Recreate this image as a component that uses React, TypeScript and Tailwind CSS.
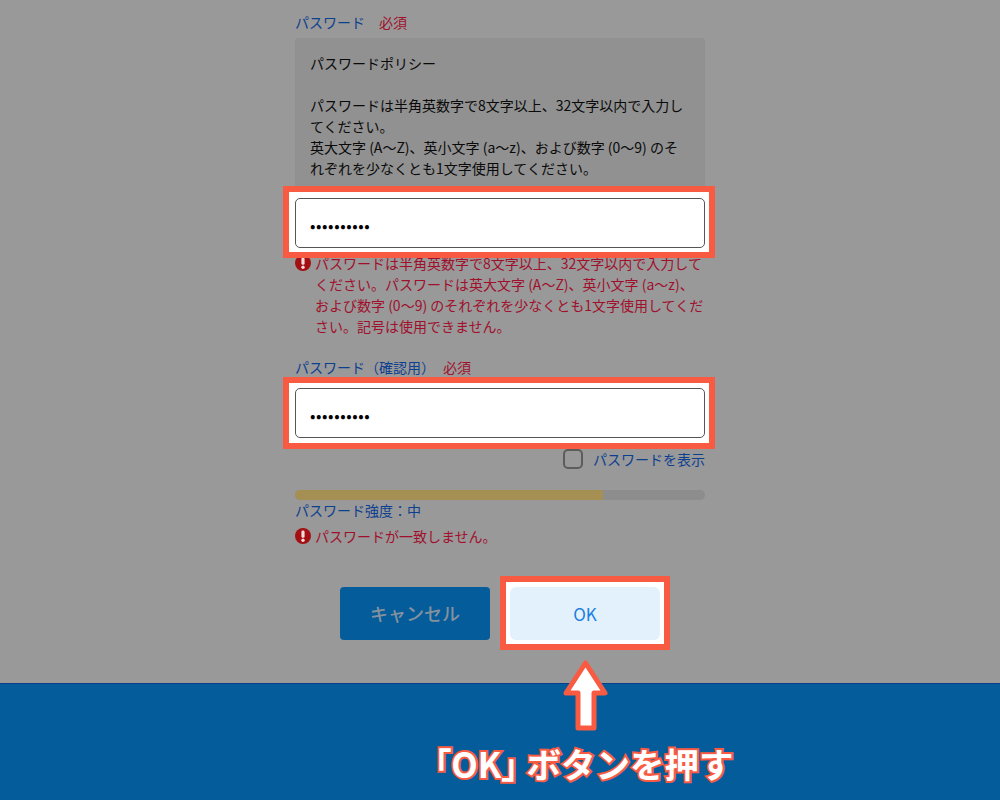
const jp = "font-['Noto_Sans_CJK_JP','Noto_Sans',sans-serif]";

function ErrorIcon() {
  return (
    <svg viewBox="0 0 16 16" className="h-[16px] w-[16px] shrink-0 mt-[2px]">
      <circle cx="8" cy="8" r="8" fill="#a30f12" />
      <rect x="6.4" y="2.6" width="3.2" height="7.2" rx="1.4" fill="#f3dcdc" />
      <circle cx="8" cy="12.2" r="1.7" fill="#f3dcdc" />
    </svg>
  );
}

function FieldError({ children }: { children: React.ReactNode }) {
  return (
    <div className="flex gap-[4px] text-[14px] leading-[21px] text-[#a0102c]">
      <ErrorIcon />
      <p>{children}</p>
    </div>
  );
}

function FieldLabel({ text, gap }: { text: string; gap: string }) {
  return (
    <div className={`flex text-[14px] leading-[21px] text-[#0d3f8f] ${gap}`}>
      <span>{text}</span>
      <span className="text-[#a0102c]">必須</span>
    </div>
  );
}

function PasswordFrame({ frameClass }: { frameClass: string }) {
  return (
    <div className={`relative -ml-[12px] -mr-[10px] border-[6px] border-[#f95a42] bg-white pl-[6px] pr-[4px] ${frameClass}`}>
      <input
        type="password"
        readOnly
        value="1234567890"
        className="block h-[50px] w-full rounded-[5px] border border-[#555] bg-white px-[14px] pt-[3px] text-[16px] tracking-[0.6px] text-black outline-none"
      />
    </div>
  );
}

export default function App() {
  return (
    <div className={`flex h-[800px] w-[1000px] flex-col overflow-hidden bg-[#999999] ${jp}`}>
      <div className="mx-auto h-[683px] w-[410px] pt-[12px]">
        <FieldLabel text="パスワード" gap="gap-[14px]" />
        <div className="mt-[5px] rounded-t-[3px] bg-[#919191] px-[15px] pb-[7px] pt-[15px] text-[14px] leading-[21px] text-[#0a0a0a]">
          <p>パスワードポリシー</p>
          <p className="mt-[21px]">
            パスワードは半角英数字で8文字以上、32文字以内で入力してください。
            <br />
            英大文字 (A～Z)、英小文字 (a～z)、および数字 (0～9) のそれぞれを少なくとも1文字使用してください。
          </p>
        </div>
        <PasswordFrame frameClass="pt-[6px] pb-[4px]" />
        <div className="-mt-[5px]">
          <FieldError>
            パスワードは半角英数字で8文字以上、32文字以内で入力してください。パスワードは英大文字 (A～Z)、英小文字 (a～z)、および数字 (0～9) のそれぞれを少なくとも1文字使用してください。記号は使用できません。
          </FieldError>
        </div>
        <div className="mt-[20px]">
          <FieldLabel text="パスワード（確認用）" gap="gap-[8px]" />
        </div>
        <div className="-mt-[1px]">
          <PasswordFrame frameClass="pt-[5px] pb-[5px]" />
        </div>
        <div className="flex items-center justify-end gap-[10px] text-[14px] leading-[20px] text-[#0d3f8f]">
          <span className="h-[20px] w-[20px] rounded-[5px] border-2 border-[#5c5c5c]" />
          <span>パスワードを表示</span>
        </div>
        <div className="mt-[21px] h-[10px] overflow-hidden rounded-full bg-[#8d8d8d]">
          <div className="h-full w-[75%] bg-[#a68f52]" />
        </div>
        <p className="text-[14px] leading-[21px] text-[#0d3f8f]">パスワード強度：中</p>
        <div className="mt-[5px]">
          <FieldError>パスワードが一致しません。</FieldError>
        </div>
        <div className="relative mt-[40px] flex justify-center gap-[20px]">
          <button className="h-[53px] w-[150px] rounded-[4px] bg-[#055c9b] text-[18px] font-medium text-[#84929e]">
            キャンセル
          </button>
          <div className="h-[53px] w-[150px] bg-white">
            <button className="h-full w-full rounded-[6px] bg-[#e3f1fd] text-[17px] text-[#1a7fe0]">OK</button>
          </div>
          <div className="pointer-events-none absolute left-[205px] top-[-11px] h-[74px] w-[170px] border-[6px] border-[#f95a42]">
            <div className="h-full w-full border-[4px] border-t-[5px] border-white" />
          </div>
        </div>
      </div>
      <div className="relative flex-1 border-t border-[#0a3f8a] bg-[#055c9b]">
        <svg viewBox="0 0 47 72" className="absolute left-[562px] top-[-25px] h-[72px] w-[47px]">
          <path
            d="M23.5 4 L43 34 H32 V69 H16 V34 H4 Z"
            fill="#fff"
            stroke="#f95a42"
            strokeWidth="5"
            strokeLinejoin="round"
          />
        </svg>
        <p className="absolute left-[434px] top-[57px] whitespace-nowrap text-[34.5px] font-bold leading-[44px] text-white [-webkit-text-stroke:4px_#f95a42] [paint-order:stroke_fill]">
          <span className="[font-feature-settings:'palt']">「OK」</span> ボタンを押す
        </p>
      </div>
    </div>
  );
}
